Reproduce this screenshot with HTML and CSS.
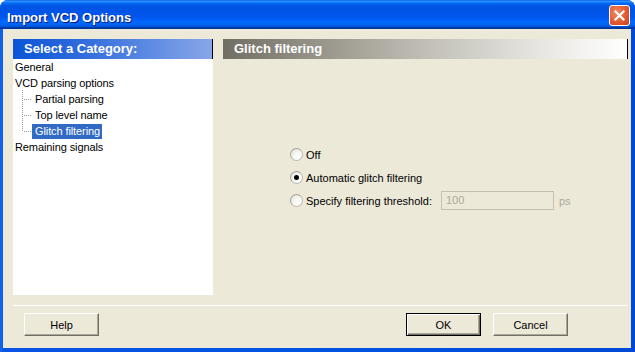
FILE: index.html
```html
<!DOCTYPE html>
<html>
<head>
<meta charset="utf-8">
<title>Import VCD Options</title>
<link rel="stylesheet" href="styles.css">
</head>
<body>
<div class="window">
  <div class="titlebar">
    <span class="title">Import VCD Options</span>
    <span class="close">
      <svg width="19" height="19" viewBox="0 0 19 19"><path d="M5.5 5.5 L13.5 13.5 M13.5 5.5 L5.5 13.5" stroke="#fff" stroke-width="2.2" stroke-linecap="square"/></svg>
    </span>
  </div>
  <div class="client">
    <div class="main">
      <div class="categories">
        <div class="cat-header">Select a Category:</div>
        <div class="tree">
          <div class="row"><span class="label">General</span></div>
          <div class="row"><span class="label">VCD parsing options</span></div>
          <div class="row child"><span class="label">Partial parsing</span></div>
          <div class="row child"><span class="label">Top level name</span></div>
          <div class="row child last"><span class="label selected">Glitch filtering</span></div>
          <div class="row"><span class="label">Remaining signals</span></div>
        </div>
      </div>
      <div class="page">
        <div class="page-header">Glitch filtering</div>
        <div class="options">
          <div class="opt"><span class="radio"></span><span>Off</span></div>
          <div class="opt"><span class="radio checked"></span><span>Automatic glitch filtering</span></div>
          <div class="opt"><span class="radio"></span><span class="opt-label">Specify filtering threshold:</span><span class="field">100</span><span class="unit">ps</span></div>
        </div>
      </div>
    </div>
    <div class="separator"></div>
    <div class="buttons">
      <button class="btn">Help</button>
      <span class="spacer"></span>
      <button class="btn default">OK</button>
      <button class="btn">Cancel</button>
    </div>
  </div>
</div>
</body>
</html>
```
FILE: styles.css
```css
* { box-sizing: border-box; }
html, body { margin: 0; padding: 0; background: #ffffff; }
body {
  width: 635px; height: 352px; overflow: hidden;
  font-family: "Liberation Sans", Arial, sans-serif;
  font-size: 11px; color: #000;
}
.window {
  width: 635px; height: 352px;
  display: flex; flex-direction: column;
  background: linear-gradient(to right, #0a4fe0 0px, #166cf2 1px, #0a53e4 3px, #0054e3 50%, #0048d8 100%);
  border-radius: 8px 8px 0 0;
  overflow: hidden;
}
.titlebar {
  height: 29px; flex: none;
  display: flex; align-items: flex-start;
  background: linear-gradient(to bottom, #0058ee 0%, #3593ff 4%, #288eff 6%, #127dff 8%, #036ffc 10%, #0262ee 14%, #0057e5 20%, #0054e3 24%, #0055eb 56%, #005bf5 66%, #026afe 76%, #0062ef 86%, #0052d6 92%, #0040ab 94%, #003092 100%);
}
.title {
  margin: 10px 0 0 7px;
  line-height: 15px;
  font-size: 13px; font-weight: bold; color: #fff;
  text-shadow: 1px 1px 0 #0a1883;
}
.close {
  margin: 5px 5px 0 auto;
  width: 21px; height: 21px;
  border: 1px solid #fff; border-radius: 3px;
  background: radial-gradient(circle at 35% 35%, #f08a62 0%, #e35a30 55%, #c8401c 100%);
  display: flex; align-items: center; justify-content: center;
}
.close svg { display: block; }
.client {
  flex: 1;
  margin: 0 4px 4px 3px;
  background: #ece9d8;
  padding: 10px 3px 0 10px;
  display: flex; flex-direction: column;
}
.main { display: flex; gap: 10px; height: 256px; }
.categories { width: 200px; background: #fff; display: flex; flex-direction: column; }
.cat-header, .page-header {
  height: 20px; padding: 2px 0 0 11px; line-height: 15px;
  font-size: 13px; font-weight: bold; color: #fff;
  border-right: 1px solid #000;
}
.cat-header { background: linear-gradient(to right, #0b55d8, #2a68dc 30%, #88a6e8); }
.page-header { background: linear-gradient(to right, #716f64, #b9b7ad 45%, #e9e8e4 80%, #ffffff); }
.tree { display: flex; flex-direction: column; }
.row { height: 16px; display: flex; align-items: flex-end; padding-left: 2px; position: relative; }
.label { height: 15px; line-height: 14px; white-space: nowrap; letter-spacing: -0.1px; }
.row.child { padding-left: 19px; }
.row.child .label { padding: 0 2px 0 3px; }
.row.child::before {
  content: ""; position: absolute; left: 9px; top: -1px; width: 1px; height: 17px;
  background: repeating-linear-gradient(to bottom, #9a9a9a 0 1px, transparent 1px 2px);
}
.row.child.last::before { height: 9px; }
.row.child::after {
  content: ""; position: absolute; left: 10px; top: 8px; width: 9px; height: 1px;
  background: repeating-linear-gradient(to right, transparent 0 1px, #9a9a9a 1px 2px);
}
.label.selected { background: #316ac5; color: #fff; }
.page { flex: 1; display: flex; flex-direction: column; }
.options { padding: 85px 0 0 67px; display: flex; flex-direction: column; gap: 2px; }
.opt { height: 21px; display: flex; align-items: center; white-space: nowrap; }
.radio {
  width: 13px; height: 13px; border-radius: 50%; margin-right: 3px; flex: none;
  border: 1px solid #bcbab0;
  border-top-color: #a5a39a; border-left-color: #a5a39a;
  background: radial-gradient(circle at 70% 70%, #ffffff 0%, #f6f5f0 45%, #dedcd2 100%);
  display: flex; align-items: center; justify-content: center;
}
.radio.checked::after { content: ""; width: 5px; height: 5px; border-radius: 50%; background: #000; }
.opt-label { width: 135px; }
.field {
  width: 113px; height: 19px; line-height: 17px; padding-left: 4px;
  border: 1px solid #c3c0b0; color: #aca899; background: #ece9d8;
}
.unit { margin-left: 5px; color: #aca899; }
.separator { margin-top: 10px; height: 1px; background: #fff; }
.buttons { display: flex; gap: 12px; margin-top: 7px; padding: 0 60px 0 11px; }
.spacer { flex: 1; }
.btn {
  width: 75px; height: 23px; padding: 0;
  font-family: "Liberation Sans", Arial, sans-serif; font-size: 11px; color: #000;
  background: #ece9d8;
  border: 1px solid; border-color: #fff #716f64 #716f64 #fff;
  box-shadow: inset -1px -1px 0 #aca899;
}
.btn.default {
  border: 1px solid #000;
  box-shadow: inset 1px 1px 0 #fff, inset -1px -1px 0 #716f64, inset -2px -2px 0 #aca899;
}
```
